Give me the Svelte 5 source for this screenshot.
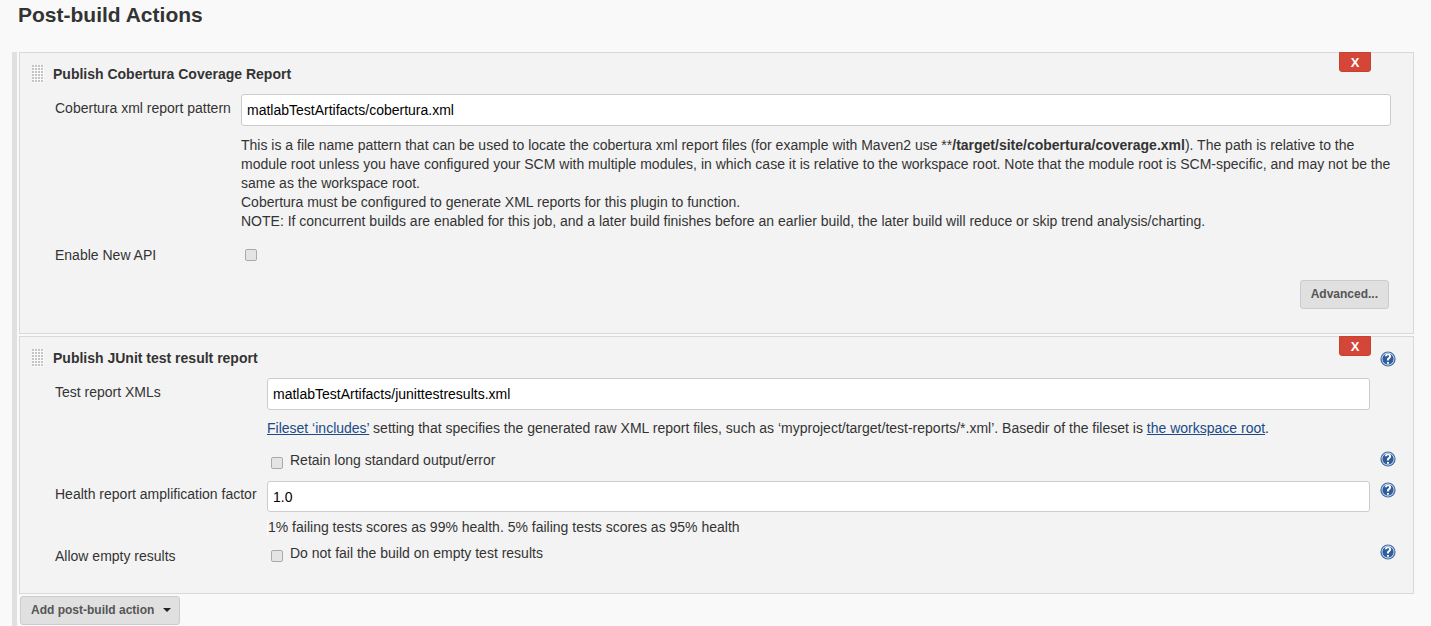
<script lang="ts">
	const helpPath = 'M8 3.4c-1.6 0-2.7.9-2.8 2.3h1.6c.1-.6.5-1 1.2-1 .6 0 1 .4 1 .9 0 .5-.3.8-.8 1.2-.8.6-1.1 1.1-1.1 2v.4h1.6v-.3c0-.5.2-.8.8-1.2.7-.5 1.2-1.1 1.2-2.1 0-1.3-1.1-2.2-2.7-2.2zM7.1 10.6h1.7v1.6H7.1z';
</script>

{#snippet help()}
	<svg class="help" viewBox="0 0 16 16" aria-hidden="true">
		<circle cx="8" cy="8" r="7.6" fill="#3d6ba6" />
		<circle cx="8" cy="8" r="6.4" fill="#dfe7f2" />
		<circle cx="8" cy="8" r="5.6" fill="#2f5c9a" />
		<path d={helpPath} fill="#fff" transform="translate(8 8) scale(1.15) translate(-8 -8)" />
	</svg>
{/snippet}

{#snippet grip()}
	<span class="grip" aria-hidden="true"></span>
{/snippet}

<div class="page">
	<h1>Post-build Actions</h1>

	<div class="actions">
		<section class="card cobertura">
			<button class="del">X</button>
			<header>{@render grip()}<b>Publish Cobertura Coverage Report</b></header>

			<div class="row">
				<label class="top" for="pattern">Cobertura xml report pattern</label>
				<input id="pattern" class="text" value="matlabTestArtifacts/cobertura.xml" />
			</div>
			<div class="row">
				<span></span>
				<div class="desc long">
					This is a file name pattern that can be used to locate the cobertura xml report files (for example with Maven2 use **<b>/target/site/cobertura/coverage.xml</b>). The path is relative to the module root unless you have configured your SCM with multiple modules, in which case it is relative to the workspace root. Note that the module root is SCM-specific, and may not be the same as the workspace root.<br />
					Cobertura must be configured to generate XML reports for this plugin to function.<br />
					NOTE: If concurrent builds are enabled for this job, and a later build finishes before an earlier build, the later build will reduce or skip trend analysis/charting.
				</div>
			</div>
			<div class="row api">
				<span class="lbl">Enable New API</span>
				<div class="check"><input type="checkbox" /></div>
			</div>
			<div class="adv"><button class="btn">Advanced...</button></div>
		</section>

		<section class="card junit">
			<button class="del">X</button>
			<span class="head-help">{@render help()}</span>
			<header>{@render grip()}<b>Publish JUnit test result report</b></header>

			<div class="row">
				<label class="top" for="xmls">Test report XMLs</label>
				<input id="xmls" class="text" value="matlabTestArtifacts/junittestresults.xml" />
				<span></span>
			</div>
			<div class="row">
				<span></span>
				<div class="desc fileset"><a href="#top">Fileset ‘includes’</a> setting that specifies the generated raw XML report files, such as ‘myproject/target/test-reports/*.xml’. Basedir of the fileset is <a href="#top">the workspace root</a>.</div>
				<span></span>
			</div>
			<div class="row retain">
				<span></span>
				<label class="check"><input type="checkbox" /> Retain long standard output/error</label>
				{@render help()}
			</div>
			<div class="row health">
				<label class="mid" for="factor">Health report amplification factor</label>
				<input id="factor" class="text" value="1.0" />
				{@render help()}
			</div>
			<div class="row">
				<span></span>
				<div class="desc score">1% failing tests scores as 99% health. 5% failing tests scores as 95% health</div>
				<span></span>
			</div>
			<div class="row empty">
				<span class="lbl mid">Allow empty results</span>
				<label class="check"><input type="checkbox" /> Do not fail the build on empty test results</label>
				{@render help()}
			</div>
		</section>

		<button class="btn add">Add post-build action <i></i></button>
	</div>
</div>

<style>
	:global(body) {
		background: #f9f9f9;
		overflow: hidden;
	}
	.page {
		height: 626px;
		overflow: hidden;
		font-family: 'Liberation Sans', Arial, sans-serif;
		font-size: 14px;
		color: #333;
	}
	h1 {
		margin: 0;
		padding: 3px 0 0 18px;
		height: 52px;
		box-sizing: border-box;
		font-size: 21px;
		line-height: 24px;
		font-weight: 700;
	}
	.actions {
		box-sizing: border-box;
		margin-left: 12px;
		width: 1402px;
		height: 574px;
		padding-left: 2px;
		border-left: 5px solid #e0e0e0;
	}
	.card {
		position: relative;
		box-sizing: border-box;
		background: #f3f3f3;
		border: 1px solid #d9d9d9;
	}
	.cobertura {
		height: 282px;
		margin-bottom: 2px;
	}
	.junit {
		height: 258px;
	}
	header {
		display: flex;
		align-items: center;
		gap: 9px;
		height: 41px;
		padding: 1px 0 0 12px;
		box-sizing: border-box;
	}
	.grip {
		width: 12px;
		height: 18px;
		background-color: #fafafa;
		background-image: radial-gradient(circle at 1px 1px, #c4c4c4 1px, transparent 1.2px);
		background-size: 3px 3px;
	}
	.del {
		position: absolute;
		top: -1px;
		left: 1319px;
		width: 32px;
		height: 20px;
		padding: 0;
		border: 1px solid #c9402f;
		border-radius: 0 0 3px 3px;
		background: #d44637;
		color: #fff;
		font: 700 13px 'Liberation Sans', Arial, sans-serif;
	}
	.head-help {
		position: absolute;
		left: 1360px;
		top: 14px;
		display: flex;
	}
	.row {
		display: grid;
		align-items: start;
		padding-left: 35px;
	}
	.cobertura .row {
		grid-template-columns: 186px 1150px;
	}
	.junit .row {
		grid-template-columns: 212px 1103px 19px;
	}
	.junit .row > :global(.help) {
		margin: 1px 0 0 10px;
	}
	label,
	.lbl {
		line-height: 20px;
	}
	.top {
		padding-top: 4px;
	}
	.mid {
		padding-top: 3px;
	}
	.text {
		box-sizing: border-box;
		width: 100%;
		height: 32px;
		padding: 0 5px;
		border: 1px solid #ccc;
		border-radius: 3px;
		background: #fff;
		color: #000;
		font: 14px 'Liberation Sans', Arial, sans-serif;
	}
	.health .text {
		height: 31px;
	}
	.desc {
		line-height: 19px;
	}
	.desc a {
		color: #204a87;
	}
	.long {
		padding-top: 10px;
	}
	.fileset {
		padding-top: 9px;
	}
	.score {
		margin-top: 8px;
		border-left: 1px solid #fff;
		line-height: 15px;
	}
	.api {
		margin-top: 14px;
	}
	.check {
		display: flex;
		align-items: flex-start;
		gap: 7px;
	}
	.check input {
		appearance: none;
		width: 12px;
		height: 12px;
		margin: 7px 0 0 4px;
		border: 1px solid #aaa;
		border-radius: 2px;
		background: #e4e4e4;
		flex: none;
	}
	.api .check input {
		margin-top: 4px;
	}
	.adv {
		display: flex;
		justify-content: flex-end;
		margin-top: 15px;
		padding-right: 24px;
	}
	.btn {
		height: 29px;
		padding: 0 10px 2px;
		border: 1px solid #ccc;
		border-radius: 3px;
		background: #e0e0e0;
		color: #555;
		font: 700 12px 'Liberation Sans', Arial, sans-serif;
		white-space: nowrap;
	}
	.add {
		display: block;
		margin: 2px 0 0 1px;
		width: 160px;
		text-align: left;
	}
	.add i {
		display: inline-block;
		margin-left: 5px;
		vertical-align: middle;
		border: 4px solid transparent;
		border-top-color: #222;
		border-bottom-width: 0;
	}
	.help {
		width: 16px;
		height: 16px;
		display: block;
	}
	.retain {
		margin-top: 12px;
	}
	.health {
		margin-top: 11px;
	}
	.empty {
		margin-top: 8px;
	}
</style>
